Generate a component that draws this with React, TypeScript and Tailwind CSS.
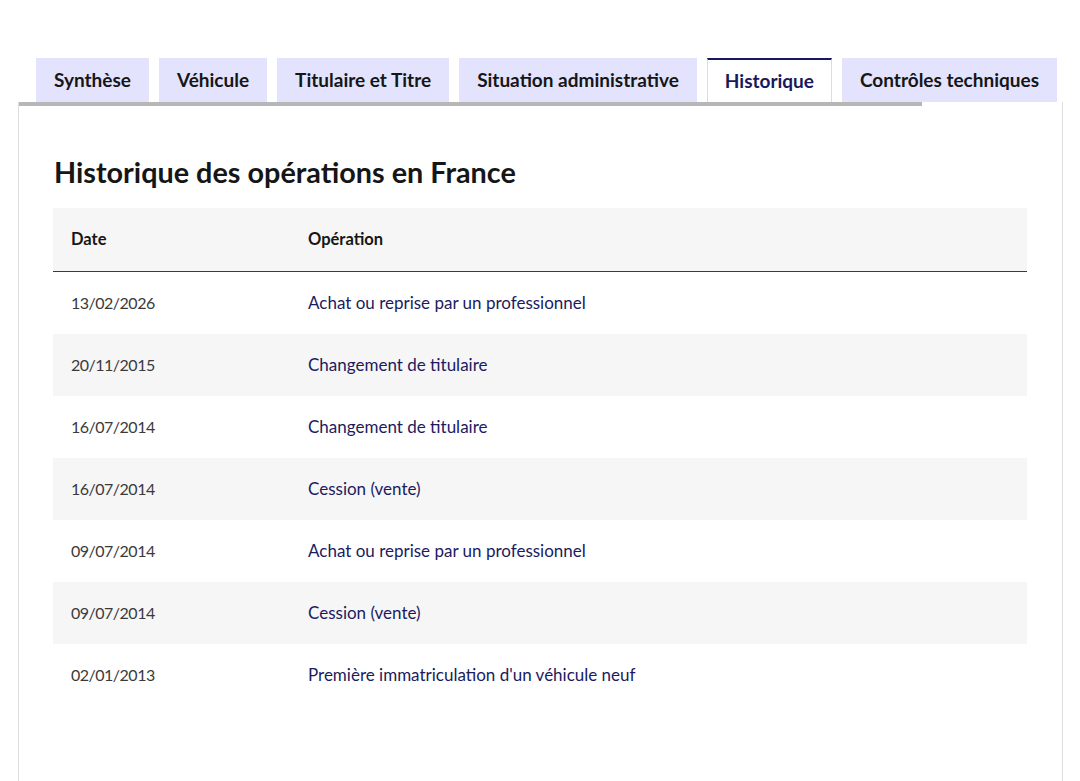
import React from "react";

const tabs = [
  "Synthèse",
  "Véhicule",
  "Titulaire et Titre",
  "Situation administrative",
  "Historique",
  "Contrôles techniques",
];

const rows: [string, string][] = [
  ["13/02/2026", "Achat ou reprise par un professionnel"],
  ["20/11/2015", "Changement de titulaire"],
  ["16/07/2014", "Changement de titulaire"],
  ["16/07/2014", "Cession (vente)"],
  ["09/07/2014", "Achat ou reprise par un professionnel"],
  ["09/07/2014", "Cession (vente)"],
  ["02/01/2013", "Première immatriculation d'un véhicule neuf"],
];

export default function App() {
  return (
    <div
      className="w-[1080px] h-[781px] overflow-hidden bg-white pt-[58px] pl-[18px]"
      style={{ fontFamily: "Lato, 'Noto Sans', sans-serif" }}
    >
      <div className="w-[1045px]">
        <div className="flex gap-[10px] pl-[18px] h-[44px]">
          {tabs.map((t) =>
            t === "Historique" ? (
              <div
                key={t}
                className="h-[44px] px-[17px] flex items-center bg-white border-t-2 border-t-[#18185e] border-x border-x-[#dddddd] text-[19px] font-bold text-[#18185e]"
              >
                {t}
              </div>
            ) : (
              <div
                key={t}
                className="h-[44px] px-[18px] flex items-center bg-[#e3e3fd] text-[19px] font-bold text-[#161616]"
              >
                {t}
              </div>
            )
          )}
        </div>
        <div className="border-x border-[#dddddd] h-[700px]">
          <div className="h-[4px] w-[903px] bg-[#b7b7b7]" />
          <div className="pl-[34px] pr-[35px] pt-[48px]">
            <h3 className="text-[28.8px] leading-[36px] font-bold text-[#161616] mb-[18px] pl-[1px]">
              Historique des opérations en France
            </h3>
            <div className="w-[974px]">
              <div className="flex h-[64px] items-center bg-[#f6f6f6] border-b border-[#3a3a3a] text-[16.5px] font-bold text-[#161616]">
                <div className="w-[237px] pl-[18px]">Date</div>
                <div className="pl-[18px]">Opération</div>
              </div>
              {rows.map(([d, op], i) => (
                <div
                  key={i}
                  className={`flex h-[62px] items-center ${
                    i % 2 === 1 ? "bg-[#f6f6f6]" : "bg-white"
                  }`}
                >
                  <div className="w-[237px] pl-[18px] text-[16px] tracking-[-0.5px] text-[#3a3a3a]">{d}</div>
                  <div className="pl-[18px] text-[17px] text-[#1b1b5e]">{op}</div>
                </div>
              ))}
            </div>
          </div>
        </div>
      </div>
    </div>
  );
}
